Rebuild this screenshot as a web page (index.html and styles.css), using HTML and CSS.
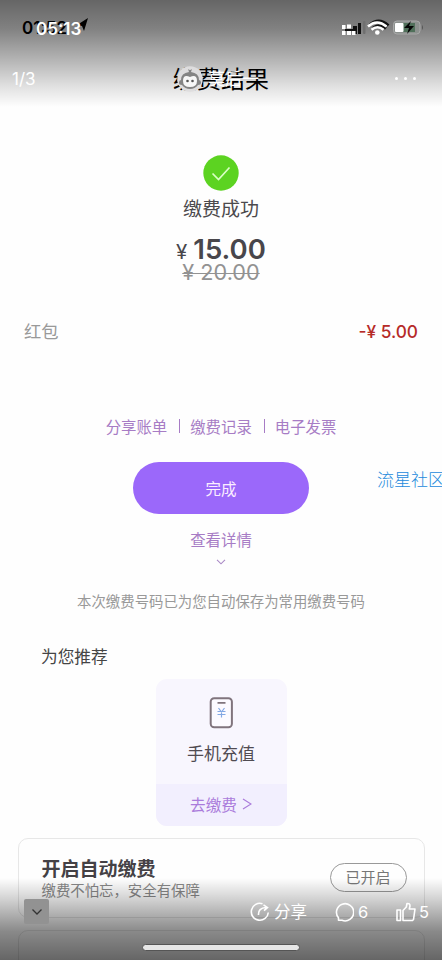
FILE: index.html
```html
<!DOCTYPE html>
<html lang="zh-CN">
<head>
<meta charset="utf-8">
<title>缴费结果</title>
<link rel="stylesheet" href="styles.css">
</head>
<body>
<div class="screen">
  <main class="page">
    <header class="page-head">
      <div class="page-status">
        <span>01:52</span>
        <svg class="locate" width="11" height="13" viewBox="0 0 11 13"><path d="M0 7 11 0 7 13 5 8Z"/></svg>
      </div>
      <h1>缴费结果</h1>
    </header>
    <section class="result">
      <svg class="success" width="36" height="36" viewBox="0 0 36 36"><circle cx="18" cy="18" r="17.7" fill="#5cd321"/><path d="m9.5 18.5 6 6L26.5 12.5" fill="none" stroke="#d9ffc4" stroke-width="1.7"/></svg>
      <p class="result-title">缴费成功</p>
      <p class="amount"><span class="yen">¥</span>15.00</p>
      <p class="old-price">¥ 20.00</p>
    </section>
    <div class="discount"><span>红包</span><span class="minus">-¥ 5.00</span></div>
    <nav class="links"><a>分享账单</a><i></i><a>缴费记录</a><i></i><a>电子发票</a></nav>
    <button class="done">完成</button>
    <a class="details">查看详情</a>
    <svg class="down" width="10" height="6" viewBox="0 0 10 6"><path d="m1 .8 4 4 4-4" fill="none" stroke="#aa8ac6" stroke-width="1.1"/></svg>
    <p class="note">本次缴费号码已为您自动保存为常用缴费号码</p>
    <h2>为您推荐</h2>
    <section class="recharge">
      <div class="recharge-main">
        <svg width="24" height="32" viewBox="0 0 24 32" fill="none"><rect x="1.7" y="1.2" width="21.2" height="29" rx="3.5" fill="#fcfaff" stroke="#80747d" stroke-width="2"/><path d="M8.500 5.8h8" stroke="#80747d" stroke-width="1.8"/><path d="m9.500 11 3 4 3-4M8.500 14.500h8M8.500 17.500h8M12.500 14v6.500" stroke="#83a8e4" stroke-width="1.2"/></svg>
        <p>手机充值</p>
      </div>
      <div class="recharge-go">去缴费<svg width="10" height="12" viewBox="0 0 10 12"><path d="m1 1 8 5-8 5" fill="none" stroke="#aa7bdb" stroke-width="1.2"/></svg></div>
    </section>
    <section class="auto">
      <div><h3>开启自动缴费</h3><p>缴费不怕忘，安全有保障</p></div>
      <span class="pill">已开启</span>
    </section>
    <section class="auto next"></section>
  </main>
  <div class="shade-top"></div>
  <div class="shade-bottom"></div>

  <div class="time">05:13</div>
  <svg class="system" width="90" height="20" viewBox="0 0 90 20">
    <g fill="#111"><rect x="12" y="7" width="4" height="8"/><rect x="17" y="4" width="3" height="11"/></g>
    <rect x="22" y="2" width="2.500" height="13" rx="1" fill="#707070"/>
    <path d="M4 10h8v2H4z" fill="#111"/>
    <g fill="#fff"><rect x="1" y="6" width="3.5" height="4"/><rect x="1" y="12" width="3.5" height="4"/><rect x="6" y="5.5" width="4" height="4"/><rect x="6" y="12" width="4" height="4"/><rect x="11" y="12" width="3.5" height="4"/></g>
    <g fill="none" stroke="#111" stroke-width="2.8"><path d="M29 5.5q9-7.5 18.500 1"/><path d="M32 9q6-5 13 .5"/></g>
    <g fill="none" stroke="#fff" stroke-width="2.500"><path d="M27 7.500q9-8 18.500 0"/><path d="M30.500 10.700q6-5 12 0"/></g>
    <circle cx="36.300" cy="13.500" r="2.300" fill="#fff"/>
    <rect x="52.500" y="2" width="26.500" height="13" rx="3.500" fill="#8c918e" stroke="#aaa"/>
    <rect x="62" y="4" width="12" height="9" fill="#50705a"/>
    <rect x="54" y="4" width="8.500" height="9" rx="1" fill="#fff"/>
    <path d="m70 2-7 7h5l-2 6 7-8h-5z" fill="#050505"/>
    <path d="M81 6v5q2-2.500 0-5" fill="#555"/>
  </svg>
  <div class="count">1/3</div>
  <div class="author">
    <svg width="26" height="28" viewBox="0 0 26 28"><circle cx="13" cy="14" r="12.800" fill="#deddde"/><path d="M11 4q2 2 4 0l-1 3q8 1 8 8 2 0 2 2.500T21 20q-3 4-8 4t-8-4q-3 0-3-2.500T4 15q0-7 8-8z" fill="#848484"/><path d="M13 12q-7-3-7 4 0 6 7 6t7-6q0-7-7-4" fill="#f7f7f7"/><circle cx="10.500" cy="16" r="1.300" fill="#555"/><circle cx="15.500" cy="16" r="1.300" fill="#555"/></svg>
    <span>莫后一</span>
  </div>
  <div class="more"><i></i><i></i><i></i></div>
  <div class="watermark">流星社区</div>
  <div class="collapse"><svg width="12" height="8" viewBox="0 0 12 8"><path d="m1.500 1.500 4.500 4.500 4.500-4.500" fill="none" stroke="#333" stroke-width="1.300"/></svg></div>
  <div class="action share"><svg width="20" height="20" viewBox="0 0 20 20"><path d="M12.500 1.700A8.500 8.500 0 1 0 18.300 10.500M8.500 13q-.5-7 7.500-7.500M13.500 2.800l4 2.700-3.500 3.200" fill="none" stroke="#fff" stroke-width="1.600"/></svg>分享</div>
  <div class="action comment"><svg width="20" height="20" viewBox="0 0 20 20"><path d="M4.500 18.300v-2.500A8.600 8.600 0 1 1 8 18.300z" fill="none" stroke="#fff" stroke-width="1.600" stroke-linejoin="round"/></svg>6</div>
  <div class="action like"><svg width="20" height="20" viewBox="0 0 20 20"><path d="M1 8h3.500v10.500H1zM7 8.500l3.300-3.500.7-3.500q3-.5 3 2.500L13.300 7H19l-1.500 10.500-1 1H7z" fill="none" stroke="#fff" stroke-width="1.600" stroke-linejoin="round"/></svg>5</div>
  <div class="home"></div>
</div>
</body>
</html>
```

FILE: styles.css
```css
* { box-sizing: border-box; }
body { margin: 0; background: #fff; font-family: Inter, "Noto Sans CJK SC", sans-serif; }
h1, h2, h3, p { margin: 0; font-weight: 400; }
.screen { position: relative; width: 442px; height: 960px; overflow: hidden; }
.page { display: flex; flex-direction: column; align-items: center; height: 960px; overflow: hidden; background: #fefefe; }
.page-head { width: 100%; height: 155px; flex: none; color: #000; }
.page-status { display: flex; align-items: center; height: 56px; padding-left: 22px; font-size: 17px; font-weight: 600; }
.page-status span { width: 54px; white-space: nowrap; }
.locate { margin: -7px 0 0 1px; }
h1 { height: 46px; line-height: 48px; text-align: center; font-size: 24px; }
.result { display: flex; flex-direction: column; align-items: center; height: 161px; flex: none; }
.success { display: block; flex: none; margin-left: 1px; }
.result-title { height: 36px; line-height: 38px; font-size: 19px; color: #4c4a4d; }
.amount { height: 36px; line-height: 44px; font-size: 27.5px; font-weight: 600; color: #48464b; }
.yen { margin-right: 6px; font-size: 20.5px; font-weight: 400; }
.old-price { height: 20px; line-height: 18px; font-size: 21.7px; color: #929292; text-decoration: line-through; text-decoration-thickness: 1px; }
.discount { display: flex; justify-content: space-between; flex: none; width: 394px; height: 30px; line-height: 31px; font-size: 17.3px; color: #999; }
.minus { color: #b62b28; font-weight: 500; }
.links { display: flex; align-items: center; flex: none; height: 30px; margin-top: 65px; font-size: 15.4px; color: #a77cc5; }
.links i { width: 1px; height: 14px; margin: 0 10px 0 12px; background: #a77cc5; }
.done { flex: none; width: 176px; height: 52px; margin-top: 21px; border: 0; border-radius: 26px; background: #9b68fa; color: #fbeeff; font: 15.5px/52px "Noto Sans CJK SC", sans-serif; padding: 0; }
.details { flex: none; height: 30px; line-height: 30px; margin-top: 12px; font-size: 15.4px; color: #a77cc5; }
.down { flex: none; margin-top: 3px; }
.note { flex: none; height: 24px; line-height: 24px; margin-top: 25px; font-size: 14.4px; color: #999; }
h2 { flex: none; width: 360px; height: 30px; line-height: 30px; margin-top: 28px; font-size: 16.7px; color: #454545; }
.recharge { flex: none; width: 131px; height: 147px; margin-top: 7px; border-radius: 11px; overflow: hidden; background: #f8f6fe; }
.recharge-main { display: flex; flex-direction: column; align-items: center; height: 105px; padding-top: 18px; }
.recharge-main p { height: 26px; line-height: 26px; margin-top: 12px; font-size: 17px; color: #504b52; }
.recharge-go { display: flex; align-items: center; justify-content: center; gap: 5px; height: 42px; padding-bottom: 2px; background: #f2effe; font-size: 15.6px; color: #aa7bdb; }
.auto { display: flex; justify-content: space-between; flex: none; width: 407px; height: 80px; margin-top: 12px; padding: 18px 17px 0 23px; border: 1px solid #e7e7e7; border-radius: 10px; }
.auto h3 { height: 24px; line-height: 26px; font-size: 19px; font-weight: 600; color: #444145; }
.auto p { height: 20px; line-height: 20px; font-size: 14.4px; color: #888; white-space: nowrap; }
.pill { width: 77px; height: 29px; margin-top: 6px; border: 1px solid #999; border-radius: 15px; line-height: 27px; text-align: center; font-size: 15px; color: #777; }
.shade-top, .shade-bottom { position: absolute; left: 0; width: 100%; }
.shade-top { top: 0; height: 107px; background: linear-gradient(rgba(0,0,0,.6), rgba(0,0,0,.49) 27%, rgba(0,0,0,.29) 56%, rgba(0,0,0,.12) 80%, transparent); }
.shade-bottom { bottom: 0; height: 82px; background: linear-gradient(transparent, rgba(0,0,0,.17) 25%, rgba(0,0,0,.46) 65%, rgba(0,0,0,.6)); }
.time { position: absolute; left: 36px; top: 18px; line-height: 22px; color: #fff; font-size: 17px; font-weight: 600; }
.system { position: absolute; left: 341px; top: 19px; }
.count { position: absolute; left: 12px; top: 68px; line-height: 22px; color: #fff; font-size: 17px; }
.author { position: absolute; left: 177px; top: 65px; display: flex; align-items: center; gap: 5px; color: #fff; font-size: 17px; line-height: 28px; }
.more { position: absolute; left: 395px; top: 77px; display: flex; gap: 6px; }
.more i { width: 3px; height: 3px; border-radius: 50%; background: #fff; }
.watermark { position: absolute; left: 377px; top: 468px; width: 65px; overflow: hidden; white-space: nowrap; line-height: 24px; font-size: 17px; font-weight: 300; color: #248bdc; }
.collapse { position: absolute; left: 24px; top: 899px; width: 25px; height: 25px; border-radius: 2px; background: #929292; display: flex; align-items: center; justify-content: center; }
.action { position: absolute; top: 900px; display: flex; align-items: center; gap: 4px; height: 24px; line-height: 24px; color: #fff; font-size: 16.5px; }
.share { left: 250px; }
.comment { left: 334px; }
.like { left: 396px; gap: 3px; }
.home { position: absolute; left: 142px; top: 944px; width: 158px; height: 7px; border: 1px solid #555; border-radius: 4px; background: #e6e6e6; }
```
